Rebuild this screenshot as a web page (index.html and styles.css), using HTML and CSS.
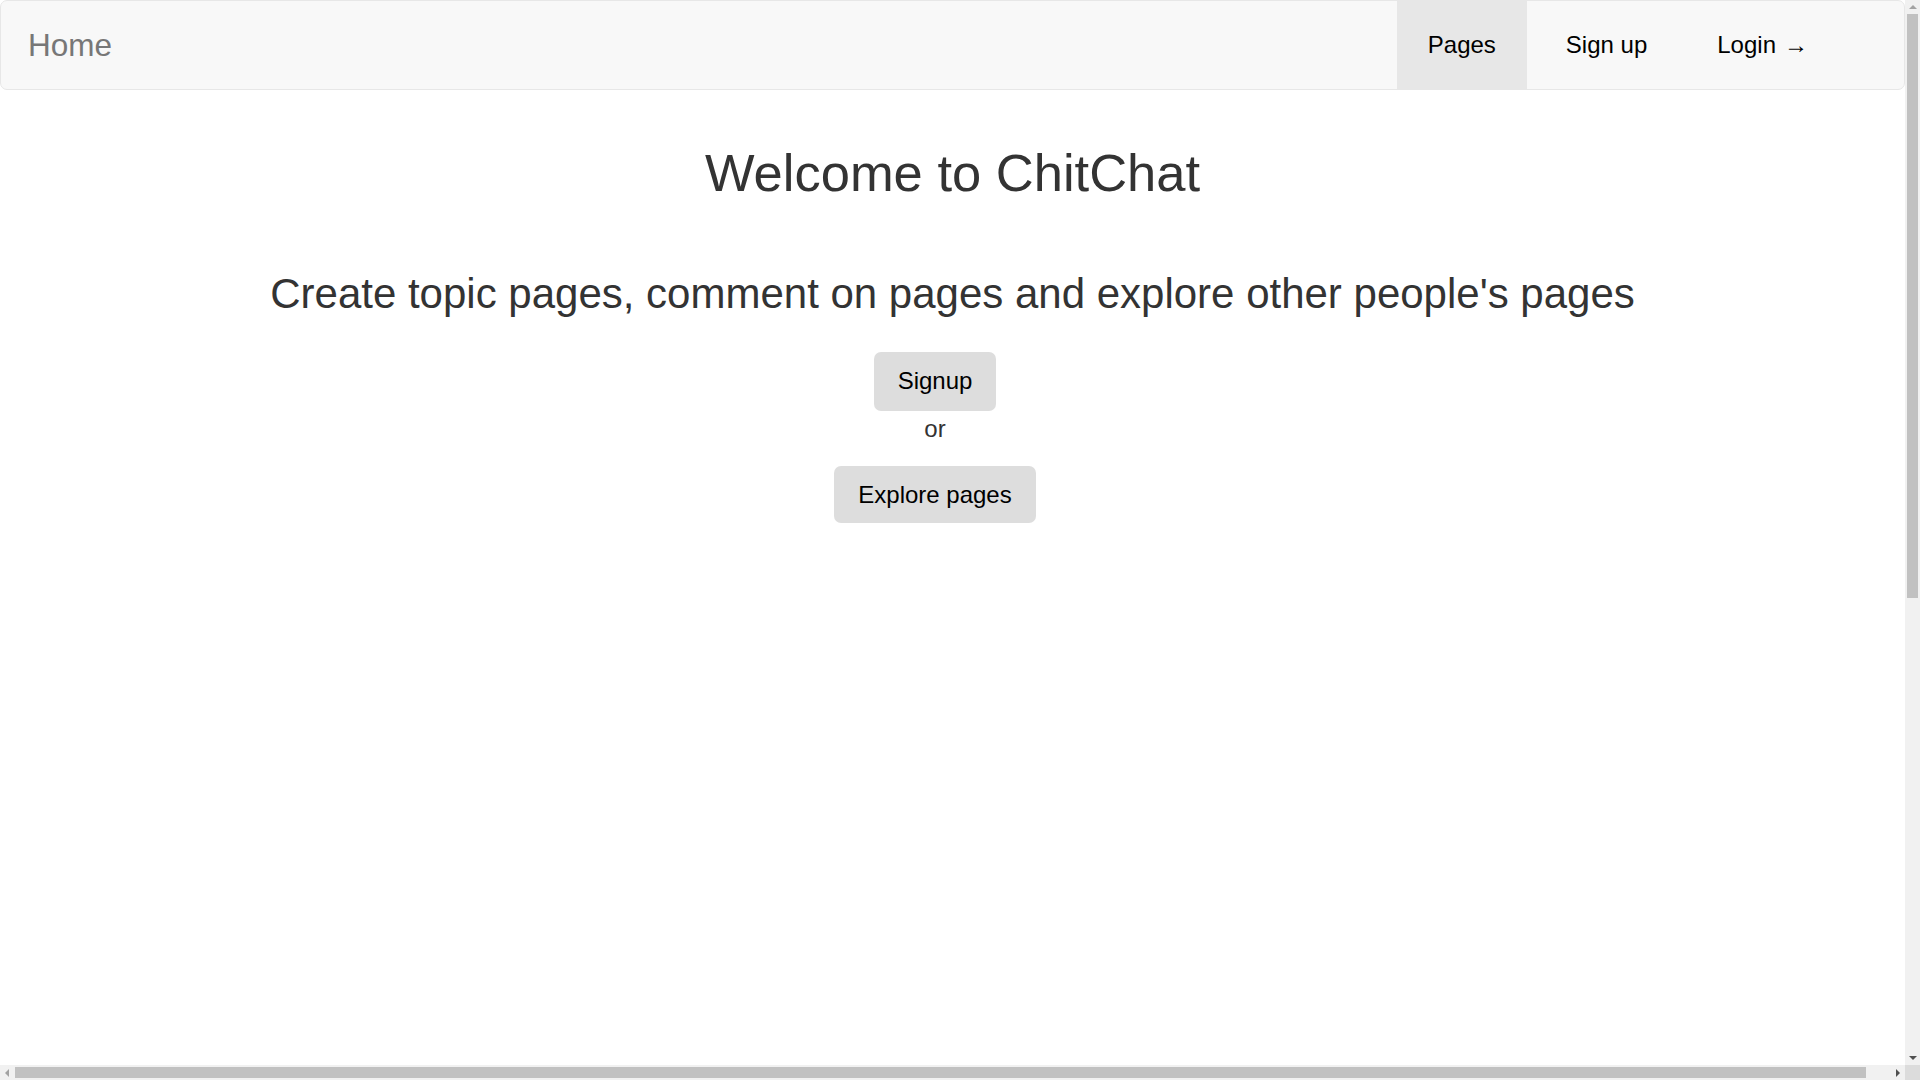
FILE: index.html
```html
<!DOCTYPE html>
<html lang="en">
<head>
<meta charset="utf-8">
<title>ChitChat</title>
<link rel="stylesheet" href="styles.css">
</head>
<body>
<nav class="navbar">
  <a class="brand" href="#">Home</a>
  <ul class="nav">
    <li class="nav-item active"><a href="#">Pages</a></li>
    <li class="nav-item"><a href="#">Sign up</a></li>
    <li class="nav-item"><a href="#">Login <span class="arrow">&rarr;</span></a></li>
  </ul>
</nav>
<main class="hero">
  <h2 class="title">Welcome to ChitChat</h2>
  <h3 class="subtitle">Create topic pages, comment on pages and explore other people's pages</h3>
  <div class="actions">
    <a class="btn" href="#">Signup</a>
    <p class="or">or</p>
    <a class="btn btn-explore" href="#">Explore pages</a>
  </div>
</main>
<div class="scrollbar scrollbar-v" aria-hidden="true">
  <span class="sb-arrow sb-up"></span>
  <span class="sb-thumb"></span>
  <span class="sb-arrow sb-down"></span>
</div>
<div class="scrollbar scrollbar-h" aria-hidden="true">
  <span class="sb-arrow sb-left"></span>
  <span class="sb-thumb"></span>
  <span class="sb-arrow sb-right"></span>
</div>
<div class="scrollbar-corner" aria-hidden="true"></div>
</body>
</html>
```
FILE: styles.css
```css
html {
  overflow: hidden;
}
html, body {
  padding: 0;
}
body {
  margin: 0 15px 0 0;
  font-family: "Liberation Sans", Arial, Helvetica, sans-serif;
  font-size: 24px;
  line-height: 1.42857;
  color: #333;
  background: #fff;
}
a {
  text-decoration: none;
}
.navbar {
  display: flex;
  align-items: stretch;
  justify-content: space-between;
  box-sizing: border-box;
  height: 90px;
  border: 1px solid #e7e7e7;
  border-radius: 7px;
  background: #f8f8f8;
  padding-right: 65px;
}
.brand {
  display: flex;
  align-items: center;
  padding-left: 27px;
  font-size: 31.5px;
  color: #777;
}
.nav {
  display: flex;
  gap: 8px;
  margin: 0;
  padding: 0;
  list-style: none;
}
.nav-item {
  display: flex;
}
.nav-item a {
  display: flex;
  align-items: center;
  padding: 0 31px;
  color: #000;
}
.nav-item.active a {
  background: #e7e7e7;
}
.arrow {
  font-size: 24px;
  margin-left: 8px;
  position: relative;
  top: 0;
}
.hero {
  text-align: center;
}
.title {
  margin: 54px 0 0;
  font-size: 52.5px;
  font-weight: 500;
  line-height: 1.1;
  color: #333;
}
.subtitle {
  margin: 69px 0 0;
  font-size: 42px;
  font-weight: 500;
  line-height: 1.1;
  color: #333;
}
.actions {
  display: flex;
  flex-direction: column;
  align-items: center;
  margin: 35.5px 35px 0 0;
}
.btn {
  display: inline-block;
  padding: 12px 23.5px;
  font-size: 24px;
  line-height: 34.3px;
  background: #ddd;
  color: #000;
  border-radius: 7px;
}
.btn-explore {
  padding: 11.5px 24.5px;
  margin-top: 20px;
}
.or {
  margin: 1px 0 0;
  font-size: 24px;
  line-height: 34.3px;
  color: #333;
}

/* browser scrollbars shown in the capture */
.scrollbar {
  position: fixed;
  background: #f1f1f1;
}
.scrollbar-v {
  top: 0;
  right: 0;
  width: 15px;
  bottom: 15px;
}
.scrollbar-h {
  left: 0;
  bottom: 0;
  height: 15px;
  right: 15px;
}
.scrollbar-corner {
  position: fixed;
  right: 0;
  bottom: 0;
  width: 15px;
  height: 15px;
  background: #dcdcdc;
}
.sb-thumb {
  position: absolute;
  background: #c1c1c1;
}
.scrollbar-v .sb-thumb {
  left: 2px;
  right: 2px;
  top: 14px;
  height: 584px;
}
.scrollbar-h .sb-thumb {
  top: 2px;
  bottom: 2px;
  left: 15px;
  width: 1851px;
}
.sb-arrow {
  position: absolute;
  width: 0;
  height: 0;
  border: 4px solid transparent;
}
.sb-up {
  left: 3.5px;
  top: 1px;
  border-bottom-color: #a3a3a3;
}
.sb-down {
  left: 3.5px;
  bottom: 1px;
  border-top-color: #505050;
}
.sb-left {
  top: 3.5px;
  left: 1px;
  border-right-color: #a3a3a3;
}
.sb-right {
  top: 3.5px;
  right: 1px;
  border-left-color: #505050;
}
```
